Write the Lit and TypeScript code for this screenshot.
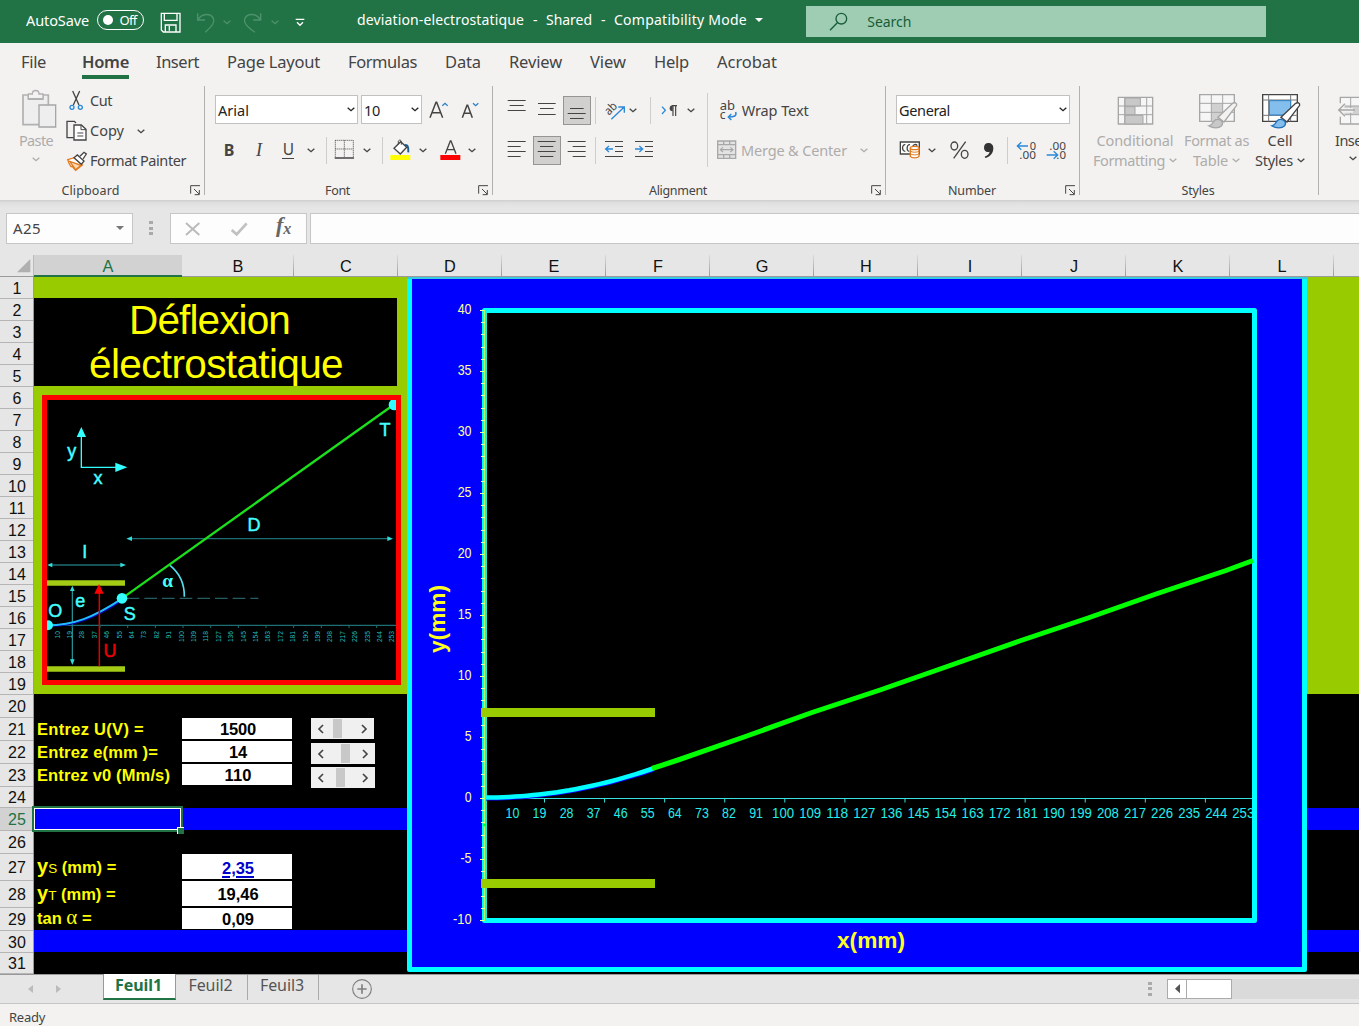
import { LitElement, html, css, svg } from "lit";
import { customElement, property } from "lit/decorators.js";

/** Inline text whose tracking is adjusted so that it spans a given width. */
@customElement("fit-text")
class FitText extends LitElement {
  @property({ type: Number }) w = 0;
  static styles = css`
    :host { display: inline-block; white-space: pre; flex: none; }
  `;
  render() {
    return html`<slot></slot>`;
  }
  firstUpdated() {
    const n = (this.textContent || "").length;
    const natural = this.getBoundingClientRect().width;
    if (n && this.w) this.style.letterSpacing = (this.w - natural) / n + "px";
  }
}

const fit = (text: string, w: number, cls = "") =>
  html`<fit-text class=${cls} w=${w}>${text}</fit-text>`;

/** Icons are drawn on a grid of three units per pixel. */
const icon = (x: number, y: number, w: number, h: number, body: unknown, cls = "") =>
  html`<svg class="ic ${cls}" width=${w / 3} height=${h / 3} viewBox="${x} ${y} ${w} ${h}">${body}</svg>`;

const chev = (cls = "") =>
  icon(0, 0, 24, 15, svg`<path d="M2 2l10 9 10-9" fill="none" stroke="currentColor" stroke-width="4"/>`, "chev " + cls);
const sep = () => html`<i class="sep"></i>`;

const launcher = icon(569, 555, 32, 32, svg`<path d="M571 581v-24h28M581 567l15 15M597 570v14h-14" fill="none" stroke="#444" stroke-width="3"/>`);

const lines = (rows: number[][], color = "#444") =>
  rows.map(([x, y, w]) => svg`<rect x=${x} y=${y} width=${w} height="3" fill=${color}/>`);

const I = {
  save: icon(478, 36, 66, 66, svg`<path d="M482 40h56v56h-50l-6-6zM491 40v21h38v-21M494 96v-21h32v21M506 78v14" fill="none" stroke="#fff" stroke-width="4"/>`),
  undo: icon(585, 36, 58, 64, svg`<path d="M590 40v20h22M591 59c12-20 38-20 46-4 6 14-6 24-24 42" fill="none" stroke="#4d926c" stroke-width="4"/>`),
  redo: icon(729, 36, 58, 64, svg`<path d="M782 40v20h-22M781 59c-12-20-38-20-46-4-6 14 8 26 30 42" fill="none" stroke="#4d926c" stroke-width="4"/>`),
  qat: icon(886, 52, 30, 26, svg`<path d="M888 56h26M892 65l9 9 9-9" fill="none" stroke="#fff" stroke-width="4"/>`),
  search: icon(1288, 34, 58, 60, svg`<circle cx="1325" cy="54" r="16" fill="none" stroke="#185c37" stroke-width="4"/><path d="M1313 66l-22 23" stroke="#185c37" stroke-width="4"/>`),
  paste: icon(62, 268, 108, 118, svg`<path d="M68 286h76v89h-76z" fill="#eee" stroke="#b1b1b1" stroke-width="5"/><path d="M84 287h44v12h-44z" fill="#f3f2f1" stroke="#b1b1b1" stroke-width="4"/><path d="M84 297v-14h12c0-14 20-14 20 0h12v14z" fill="#f3f2f1" stroke="#b1b1b1" stroke-width="4"/><path d="M116 316h50v66h-50z" fill="#eee" stroke="#a6a6a6" stroke-width="4"/>`),
  cut: icon(206, 270, 44, 64, svg`<path d="M217 273l19 42M238 273l-19 42" fill="none" stroke="#444" stroke-width="4"/><circle cx="215" cy="322" r="6" fill="none" stroke="#2b88d8" stroke-width="4"/><circle cx="240" cy="322" r="6" fill="none" stroke="#2b88d8" stroke-width="4"/>`),
  copy: icon(196, 358, 64, 64, svg`<path d="M219 411h-20v-49h22l5 5" fill="none" stroke="#444" stroke-width="4"/><path d="M220 373h22l14 13v32h-36z" fill="#fff" stroke="#444" stroke-width="4"/><path d="M241 373v14h15M230 397h18M230 406h18" fill="none" stroke="#444" stroke-width="3"/>`),
  painter: icon(196, 446, 64, 62, svg`<path d="M201 472l20-6 24 22-20 16c-5-4-7-8-10-12l-4 1c-5-6-8-14-10-21z" fill="#fff" stroke="#e07b21" stroke-width="4"/><path d="M207 477l34 12-16 13z" fill="#fbd9b4" stroke="#e07b21" stroke-width="4"/><path d="M220 466l10-8 20 18-8 10z" fill="#fff" stroke="#444" stroke-width="4"/><path d="M238 462l12-12 7 5-10 15" fill="#fff" stroke="#444" stroke-width="4"/>`),
  grow: icon(490, 296, 62, 58, svg`<path d="M493 349l18-46h2l18 46M499 334h26" fill="none" stroke="#444" stroke-width="4.5"/><path d="M530 313l8-7 8 7" fill="none" stroke="#2b7fc2" stroke-width="4"/>`),
  shrink: icon(584, 296, 56, 58, svg`<path d="M588 349l14-37h2l14 37M593 336h20" fill="none" stroke="#444" stroke-width="4.5"/><path d="M620 306l8 7 8-7" fill="none" stroke="#2b7fc2" stroke-width="4"/>`),
  borders: icon(1002, 417, 64, 64, svg`<path d="M1006 421h54v50M1006 421v50M1033 421v50M1006 447h54" fill="none" stroke="#444" stroke-width="3" stroke-dasharray="3 3"/><path d="M1004 474h58" stroke="#444" stroke-width="4.5"/>`),
  fill: icon(1172, 417, 64, 66, svg`<path d="M1184 445l20-20 18 17-19 20z" fill="#fff" stroke="#444" stroke-width="4"/><path d="M1197 433v-9c2-6 9-4 9 1v9" fill="none" stroke="#444" stroke-width="3"/><path d="M1216 436c8-3 12 4 11 21" fill="none" stroke="#1e5c8c" stroke-width="6"/><path d="M1173 465h60v15h-60z" fill="#ff0"/>`),
  fontColor: icon(1319, 417, 62, 66, svg`<path d="M1335 461l15-38h2l15 38M1340 449h22" fill="none" stroke="#444" stroke-width="4"/><path d="M1320 465h60v15h-60z" fill="red"/>`),
  top: icon(322, 297, 58, 66, lines([[324, 300, 54], [330, 315, 42], [324, 330, 54]])),
  mid: icon(412, 297, 58, 66, lines([[415, 309, 53], [421, 324, 41], [415, 342, 53]])),
  bot: icon(502, 297, 58, 69, lines([[511, 324, 41], [504, 339, 54], [511, 354, 41]])),
  orient: icon(610, 296, 66, 62, svg`<text transform="translate(625 343) rotate(-45)" font-size="36" font-family="Noto Sans, sans-serif" fill="#444" textLength="38" lengthAdjust="spacingAndGlyphs">ab</text><path d="M632 354l38-36M653 317h18v17" fill="none" stroke="#2b88d8" stroke-width="4"/>`),
  dir: icon(782, 310, 50, 38, svg`<path d="M785 318l10 11-10 11" fill="none" stroke="#2b88d8" stroke-width="4"/><path d="M818 314v32M826 314v32M830 315h-15" fill="none" stroke="#444" stroke-width="3.5"/><path d="M817 314a9 9 0 0 0 0 18z" fill="#444"/>`),
  left: icon(322, 420, 58, 60, lines([[324, 423, 54], [324, 438, 39], [324, 453, 54], [324, 468, 39]])),
  center: icon(412, 420, 58, 60, lines([[414, 423, 54], [421, 438, 40], [414, 453, 54], [421, 468, 40]])),
  right: icon(502, 420, 58, 60, lines([[504, 423, 54], [519, 438, 39], [504, 453, 54], [519, 468, 39]])),
  dedent: icon(612, 420, 60, 60, svg`${lines([[615, 423, 54], [645, 438, 24], [645, 453, 24], [615, 468, 54]])}<path d="M617 447h22M627 438l-10 9 10 9" fill="none" stroke="#2b88d8" stroke-width="4"/>`),
  indent: icon(702, 420, 60, 60, svg`${lines([[705, 423, 54], [735, 438, 24], [735, 453, 24], [705, 468, 54]])}<path d="M705 447h22M718 438l10 9-10 9" fill="none" stroke="#2b88d8" stroke-width="4"/>`),
  wrap: icon(957, 298, 56, 62, svg`<text x="959" y="327" font-size="36" font-family="Noto Sans, sans-serif" fill="#444" textLength="46" lengthAdjust="spacingAndGlyphs">ab</text><text x="959" y="355" font-size="36" font-family="Noto Sans, sans-serif" fill="#444">c</text><path d="M1007 334c4 12-4 15-22 15M994 340l-9 9 9 9" fill="none" stroke="#2b88d8" stroke-width="4.5"/>`),
  merge: icon(950, 419, 60, 60, svg`<path d="M952 422h54v52h-54zM952 433h54M952 463h54M970 422v11M988 422v11M970 463v11M988 463v11" fill="#e3e3e3" stroke="#a8a8a8" stroke-width="4"/><path d="M961 448h36M968 441l-8 7 8 7M990 441l8 7-8 7" fill="none" stroke="#a8a8a8" stroke-width="3.5"/>`),
  acct: icon(58, 426, 64, 58, svg`<path d="M62 432h57v36h-57z" fill="#fff" stroke="#444" stroke-width="4"/><path d="M77 440c-10-2-12 20 0 20M91 440c-10-2-12 20-2 20M99 446c2-8 10-8 14-3" fill="none" stroke="#444" stroke-width="4"/><path d="M92 450v25c4 6 22 6 26 0v-25" fill="#fff" stroke="#e07b21" stroke-width="4"/><ellipse cx="105" cy="450" rx="13" ry="5" fill="#fff" stroke="#e07b21" stroke-width="4"/><path d="M92 459c4 5 22 5 26 0M92 467c4 5 22 5 26 0" fill="none" stroke="#e07b21" stroke-width="3"/>`),
  pct: icon(206, 420, 62, 62, svg`<ellipse cx="222" cy="438" rx="10" ry="12" fill="none" stroke="#444" stroke-width="4"/><ellipse cx="253" cy="463" rx="10" ry="12" fill="none" stroke="#444" stroke-width="4"/><path d="M256 425l-36 50" stroke="#444" stroke-width="4"/>`),
  comma: icon(312, 426, 34, 50, svg`<path d="M328 429c9 0 15 6 15 15 0 16-10 27-24 30l-2-4c8-3 14-8 15-15-10 4-17-3-17-12 0-8 5-14 13-14z" fill="#333"/>`),
  incDec: icon(406, 418, 62, 62, svg`<path d="M410 436h32M422 425l-12 11 12 11" fill="none" stroke="#2b88d8" stroke-width="4"/><text x="447" y="447" font-size="35" font-family="Noto Sans, sans-serif" fill="#444" textLength="19" lengthAdjust="spacingAndGlyphs">0</text><text x="416" y="476" font-size="35" font-family="Noto Sans, sans-serif" fill="#444" textLength="50" lengthAdjust="spacingAndGlyphs">.00</text>`),
  decDec: icon(496, 418, 62, 62, svg`<text x="506" y="447" font-size="35" font-family="Noto Sans, sans-serif" fill="#444" textLength="50" lengthAdjust="spacingAndGlyphs">.00</text><text x="527" y="476" font-size="35" font-family="Noto Sans, sans-serif" fill="#444" textLength="29" lengthAdjust="spacingAndGlyphs">.0</text><path d="M498 463h32M519 452l12 11-12 11" fill="none" stroke="#2b88d8" stroke-width="4"/>`),
  cond: icon(712, 280, 112, 90, svg`<path d="M716 284h103v80h-103z" fill="#f6f6f6" stroke="#a6a6a6" stroke-width="4"/><path d="M716 310h103M716 336h103M735 284v80M801 284v80" fill="none" stroke="#a6a6a6" stroke-width="3"/><path d="M736 286h46v24h-46zM736 312h30v24h-30zM736 338h54v26h-54z" fill="#c8c8c8" stroke="#a6a6a6" stroke-width="3"/>`),
  fmtTable: icon(954, 280, 120, 106, svg`<path d="M959 284h104v80h-104z" fill="#f6f6f6" stroke="#a6a6a6" stroke-width="4"/><path d="M994 310h34v54h-34z" fill="#d0d0d0"/><path d="M959 310h104M959 337h104M994 284v80M1028 284v80" fill="none" stroke="#a6a6a6" stroke-width="3"/><path d="M1014 352l44-42c6-4 13-1 12 6l-38 50z" fill="#f3f2f1" stroke="#a6a6a6" stroke-width="4"/><path d="M987 378c14-2 10-20 24-20 14-1 20 12 14 19-9 9-26 8-38 1z" fill="#c8c8c8" stroke="#a6a6a6" stroke-width="4"/>`),
  cellSt: icon(1143, 280, 120, 106, svg`<path d="M1148 284h104v80h-104z" fill="#fff" stroke="#444" stroke-width="4"/><path d="M1148 300h104M1148 346h104M1166 284v80M1232 284v80" fill="none" stroke="#777" stroke-width="3"/><path d="M1168 302h64v43h-64z" fill="#83beec" stroke="#2b7fc2" stroke-width="3"/><path d="M1203 352l44-42c6-4 13-1 12 6l-38 50z" fill="#fff" stroke="#444" stroke-width="4"/><path d="M1176 378c14-2 10-20 24-20 14-1 20 12 14 19-9 9-26 8-38 1z" fill="#83beec" stroke="#1e6fba" stroke-width="4"/>`),
  insert: icon(1364, 280, 110, 90, svg`<path d="M1374 284h100v80h-100z" fill="#f6f6f6" stroke="#a6a6a6" stroke-width="4"/><path d="M1374 310h100v25h-100z" fill="#d0d0d0"/><path d="M1405 284v80M1374 310h100M1374 336h100" fill="none" stroke="#a6a6a6" stroke-width="3"/><path d="M1364 302h24l-2 14h26v14h-26l2 12h-24z" fill="#f3f2f1"/><path d="M1369 322h49M1388 303l-19 19 19 19" fill="none" stroke="#a6a6a6" stroke-width="4"/>`),
};

const COLS: [string, number][] = [["A", 148], ["B", 112], ["C", 104], ["D", 104], ["E", 104], ["F", 104], ["G", 104], ["H", 104], ["I", 104], ["J", 104], ["K", 104], ["L", 104], ["", 60]];
const ROWS = [...Array(19).fill(22), 23, 23, 23, 23, 21, 23, 23, 27, 27, 23, 22, 21];
const TABS: [string, number][] = [["File", 25], ["Home", 47], ["Insert", 43], ["Page Layout", 93], ["Formulas", 69], ["Data", 36], ["Review", 53], ["View", 36], ["Help", 35], ["Acrobat", 60]];
const XL = Array.from({ length: 28 }, (_, i) => 10 + 9 * i);

/** Main chart; user units are window pixels. */
const chart = () => {
  const yOf = (v: number) => 798 - v * 12.2;
  const ticks = Array.from({ length: 51 }, (_, i) => i - 10);
  const curve = Array.from({ length: 29 }, (_, i) => `${485 + i * 6},${(797.5 - 29 * Math.pow(i / 28, 2)).toFixed(1)}`).join(" ");
  return html`<svg class="chart" width="900" height="695" viewBox="407 277 900 695">
    <rect x="407" y="277" width="900" height="695" rx="2" fill="#0ff"/>
    <rect x="407" y="277" width="900" height="2" fill="#3cc8e0"/>
    <rect x="412" y="279" width="890" height="688" fill="#00f"/>
    <rect x="484.500" y="310.500" width="770" height="610" fill="#000" stroke="#0ff" stroke-width="5" stroke-linejoin="round"/>
    <path d="M484.500 310v611" stroke="#b8ff60" stroke-width="1"/><path d="M486 313v605" stroke="#3fd8b0" stroke-width="1"/>
    ${ticks.map((v) => svg`<path d="M${v % 5 ? 481 : 480} ${Math.round(yOf(v)) + 0.5}h4" stroke="#f4ff90" stroke-width="1"/>`)}
    ${ticks.filter((v) => v % 5 === 0).map((v) => svg`<text x="471.500" y=${yOf(v) + 4} class="yl" textLength=${v < 0 ? (v === -10 ? 18.5 : 11) : v < 10 ? 6.8 : 13.8} lengthAdjust="spacingAndGlyphs">${v}</text>`)}
    <path d="M487 798.500h765" stroke="#38e0e0" stroke-width="1"/>
    ${Array.from({ length: 12 }, (_, i) => svg`<path d="M${544.5 + i * 60.08} 798v4.500" stroke="#38e0e0" stroke-width="1"/>`)}
    <clipPath id="pl"><path d="M487 313h765v605h-765z"/></clipPath>
    <g clip-path="url(#pl)">${XL.map((v, i) => svg`<text x=${512.4 + i * 27.07} y="818.300" class="xl" textLength=${v < 100 ? 13.8 : 22} lengthAdjust="spacingAndGlyphs">${v}</text>`)}</g>
    <path d="M481 708h174v9h-174zM481 879h174v9h-174z" fill="#9c0"/>
    <polyline points=${curve} transform="translate(1 1)" fill="none" stroke="#00f" stroke-width="4"/>
    <polyline points=${curve} fill="none" stroke="#0ff" stroke-width="4.500"/>
    <path d="M652 768.500L678 760 744 737 812 712.500 880 690 950 665.500 1018 641.500 1088 618 1156 594 1226 570.500 1253 560.500" fill="none" stroke="#0f0" stroke-width="5"/>
    <circle cx="484.500" cy="825" r="1.300" fill="#0f0"/>
    <text class="ax" x="837" y="948" textLength="68" lengthAdjust="spacingAndGlyphs">x(mm)</text>
    <text class="ax" transform="translate(444.500 653) rotate(-90)" textLength="68" lengthAdjust="spacingAndGlyphs">y(mm)</text>
  </svg>`;
};

/** Schematic of the deflection, three units per pixel. */
const schema = () => html`<svg class="schema" width="359" height="290" viewBox="36 30 1077 870">
  <rect x="36" y="30" width="1077" height="870" fill="red"/>
  <rect x="51" y="45" width="1047" height="840" fill="#000"/>
  <clipPath id="in"><path d="M51 45h1047v840h-1047z"/></clipPath>
  <g clip-path="url(#in)">
    <g fill="none" stroke="#3ff" stroke-width="4"><path d="M154 150v97h110"/></g>
    <path d="M154 126l14 30h-28zM292 247l-36-14v28z" fill="#3ff"/>
    <g fill="none" stroke="#1d6f73" stroke-width="4"><path d="M300 461h780M60 540h220M51 721h1047"/><path d="M290 640h395" stroke-dasharray="38 15" stroke="#235f62"/></g>
    <path d="M127 612v220" stroke="#2a9da0" stroke-width="3.500"/>
    ${Array.from({ length: 12 }, (_, i) => svg`<path d="M${127 + i * 83} 721v8" stroke="#1d6f73" stroke-width="3"/>`)}
    <path d="M289 461l17-7v14zM1089 461l-17-7v14zM51 540l16-7v14zM288 540l-17-7v14zM127 602l-7 16h14zM127 840l-7-17h14z" fill="#3dd"/>
    <path d="M51 586h234v16h-234zM51 844h234v16h-234z" fill="#a4cc14"/>
    <path d="M420 541q44 36 43 94" fill="none" stroke="#5de" stroke-width="5"/>
    <path d="M276 640L1090 60" stroke="#1be01b" stroke-width="7"/>
    <path d="M51 722C130 723 190 702 276 645" fill="none" stroke="#00a" stroke-width="7"/>
    <path d="M51 721C130 721 190 698 276 641" fill="none" stroke="#2bf" stroke-width="6"/>
    <path d="M208 844v-224" stroke="#d00" stroke-width="4.500"/><path d="M207 597l14 29h-28z" fill="#f00"/>
    <circle cx="276" cy="640" r="16" fill="#3ff"/><circle cx="1093" cy="59" r="17" fill="#3ff"/><circle cx="54" cy="721" r="15" fill="#3ff"/>
    <g class="sl">
      <text x="125" y="216">y</text><text x="204" y="297">x</text><text x="1065" y="153">T</text><text x="672" y="439">D</text><text x="164" y="519">I</text>
      <text x="151" y="666">e</text><text x="76" y="697">O</text><text x="299" y="706">S</text><text x="413" y="607" class="alpha">α</text><text x="240" y="817" class="u">U</text>
    </g>
    ${XL.map((v, i) => svg`<text class="tiny" transform="translate(${89 + i * 37.2} 738) rotate(-90)">${v}</text>`)}
  </g>
</svg>`;

const spin = (cls: string) => html`<div class="spin ${cls}">
  ${icon(0, 0, 24, 30, svg`<path d="M18 3L6 15l12 12" fill="none" stroke="#444" stroke-width="5"/>`)}<b></b>
  ${icon(0, 0, 24, 30, svg`<path d="M6 3l12 12L6 27" fill="none" stroke="#444" stroke-width="5"/>`)}</div>`;

@customElement("app-root")
class AppRoot extends LitElement {
  static styles = css`
    :host { display: flex; flex-direction: column; width: 1359px; height: 1026px; overflow: hidden; background: #e6e6e6; color: #444; font: 14.5px/20px "Noto Sans", "Open Sans", sans-serif; }
    * { box-sizing: border-box; }
    .ic { display: block; flex: none; overflow: visible; }
    .sep { width: 1px; height: 27px; background: #cfcdcb; }
    .dis { color: #aeacaa; }
    /* title bar */
    .title { flex: none; height: 43px; background: #217346; color: #fff; display: flex; align-items: center; padding: 0 0 3px 26px; }
    .toggle { width: 47px; height: 20px; margin: 0 16px 0 8px; border: 1.4px solid #fff; border-radius: 10px; display: flex; align-items: center; font-size: 13px; padding-left: 4.5px; gap: 7px; }
    .toggle b { width: 10px; height: 10px; border-radius: 5px; background: #fff; }
    .qat { display: flex; align-items: center; width: 195px; padding-top: 5px; }
    .qat .dim { color: #4d926c; margin: 0 12px 0 8px; }
    .qat .g1 { width: 14px; } .qat .g2 { width: 4px; }
    .doc { display: flex; gap: 9px; margin-left: 2px; font-size: 14px; width: 449px; align-items: center; }
    .doc svg { margin-left: -1px; }
    .search { width: 460px; height: 31px; margin-top: 3px; background: #9fcdb3; display: flex; align-items: center; color: #185c37; padding-left: 23px; gap: 19px; font-size: 14px; }
    /* tabs */
    .tabs { flex: none; height: 43px; background: #f3f2f1; display: flex; gap: 28px; padding-left: 21px; font-size: 16.5px; line-height: 38px; }
    .tabs fit-text { height: 36px; }
    .tabs .on { font-weight: 600; margin-left: 8px; border-bottom: 4px solid #217346; margin-right: -1px; }
    /* ribbon */
    .ribbon { flex: none; height: 114px; background: #f3f2f1; display: flex; }
    .g { height: 109px; border-right: 1px solid #b3b0ad; display: flex; flex-direction: column; justify-content: space-between; flex: none; }
    .foot { height: 20px; display: grid; grid-template-columns: 1fr 11px; align-items: center; padding-right: 3px; font-size: 12.5px; text-align: center; margin-bottom: -5px; flex: none; }
    .foot span { padding-top: 1px; }
    .clip { width: 205px; } .clip .foot fit-text { margin-left: -9px; }
    .font { width: 288px; } .font .foot fit-text { margin-left: -8px; }
    .align { width: 393px; } .align .foot fit-text { margin-left: -8px; }
    .num { width: 194px; } .num .foot fit-text { margin-left: -7px; }
    .sty { width: 239px; } .sty .foot fit-text { margin-left: 12px; }
    .last { border: 0; width: 40px; overflow: hidden; padding: 7px 0 0 16px; }
    .cb { display: flex; height: 86px; }
    .paste { width: 66px; padding: 3px 0 0 6px; display: flex; flex-direction: column; align-items: center; flex: none; }
    .paste .ic:first-child { margin-left: 6px; } .paste fit-text { margin: 2px 0 7px; }
    .cl { display: grid; grid-template-rows: 30px 30px 30px; height: 90px; }
    .cl div { display: grid; grid-template-columns: 24px auto auto; justify-content: start; align-items: center; }
    .cl fit-text { padding-bottom: 2px; }
    .cl .ic:first-child { justify-self: start; } .cl .chev { margin-left: 13px; }
    .cl div:first-child .ic { margin-left: 3px; }
    .r { display: grid; justify-items: center; align-items: center; height: 30px; }
    .rows { padding-top: 9px; display: grid; row-gap: 10px; align-content: start; }
    .f1 { column-gap: 3px; margin-left: 10px; justify-content: start; grid-template-columns: 143px 61px 28px 29px; }
    .f2 { margin-left: 9px; grid-template-columns: 30px 30px 28px 18px 12px 25px 20px 10px 28px 16px 38px 6px; }
    .box { justify-self: stretch; height: 29px; background: #fff; border: 1px solid #c3c1bf; display: flex; align-items: center; justify-content: space-between; padding: 0 2px 0 2px; color: #222; margin-top: -1px; }
    .bold { font-weight: 700; font-size: 16px; } .it { font: italic 18px "Liberation Serif", serif; } .un { border-bottom: 1.5px solid #444; line-height: 17px; padding: 0 0 0 1px; font-size: 15.5px; }
    .al { display: flex; height: 86px; }
    .a1 { margin-left: 9px; grid-template-columns: 30px 30px 30px 7px 31px 6px 29px 8px 36px; }
    .a2 { margin-left: 9px; grid-template-columns: 30px 30px 30px 6px 32px 28px; justify-content: start; }
    .on-b { width: 28px; height: 29px; background: #d2d0ce; border: 1px solid #979593; display: grid; place-items: center; }
    .al > .sep { height: 74px; margin: 7px 10px 0 -2px; }
    .w { display: flex; align-items: center; height: 30px; } .w .tx { margin-left: 4px; } .w .chev { margin-left: 13px; }
    .w .ic:first-child { margin-left: 1px; } .w.m .ic:first-child { margin-left: -1px; }
    .n1 { margin-left: 10px; grid-template-columns: 174px; justify-content: start; }
    .n2 { margin-left: 10px; grid-template-columns: 28px 16px 38px 22px 14px 24px 36px; justify-content: start; }
    .st { display: grid; grid-template-columns: 82px 81px 46px; padding: 7px 0 0 14px; text-align: center; }
    .big { display: flex; flex-direction: column; align-items: center; }
    .big .ic:first-child { height: 36px; margin-bottom: 1px; margin-left: 2px; }
    .big div { display: flex; gap: 4px; align-items: center; height: 20px; }
    .last .big { align-items: flex-start; } .last .chev { margin: 6px 0 0 14px; }
    /* formula bar */
    .fbar { flex: none; height: 55px; display: flex; align-items: flex-start; padding: 13px 0 0 6px; background: linear-gradient(#cfcfcf, #e0e0e0 3px, #e6e6e6 8px); }
    .fb { height: 31px; background: #fdfdfd; border: 1px solid #c6c6c6; display: flex; align-items: center; }
    .nb { width: 127px; justify-content: space-between; padding: 0 8px 2px 6px; font-size: 15px; }
    .dots { width: 4px; height: 15px; background: repeating-linear-gradient(#aaa 0 3px, transparent 3px 5.5px); margin: 8px 17px 0 16px; flex: none; }
    .fx { width: 137px; padding-left: 14px; gap: 30px; margin-right: 3px; } .fx em { font: italic 700 22px/26px "Liberation Serif", serif; color: #666; margin: -4px 0 0 -1px; } .fx sub { font-size: 16px; vertical-align: -2px; }
    .in { flex: 1; border-right: 0; }
    /* headers */
    .ch { flex: none; height: 22px; display: flex; font: 16.3px/22px "Liberation Sans", Arial, sans-serif; color: #111; border-bottom: 1px solid #9b9b9b; }
    .corner { width: 34px; padding: 4px 0 0 17px; flex: none; border-right: 1px solid #bbb; }
    .ch span { flex: none; text-align: center; padding-left: 1px; border-right: 1px solid; border-image: linear-gradient(#ddd, #999) 1; }
    .ch .sel { background: #d2d2d2; color: #217346; height: 22px; border: 0; border-image: none; box-shadow: inset 0 -2px #217346; padding: 0; }
    .main { flex: none; height: 697px; display: flex; overflow: hidden; }
    .rh { flex: none; width: 34px; font: 16px "Liberation Sans", Arial, sans-serif; color: #111; border-right: 1px solid #9b9b9b; display: flex; flex-direction: column; }
    .rh span { display: flex; align-items: center; justify-content: center; border-bottom: 1px solid #b5b5b5; flex: none; padding: 2px 0 0 1px; }
    .rh .sel { background: #d2d2d2; color: #217346; }
    .sheet { position: relative; width: 1325px; height: 697px; background: #000; display: grid; grid-template-columns: 148px 110px 105px 1fr; grid-template-rows: 21px 88px 308px 23px 23px 23px 23px 22px 22px 23px 27px 27px 23px 22px 22px; font: bold 16.5px/22px "Liberation Sans", Arial, sans-serif; }
    .olive { grid-area: 1 / 1 / 4 / 5; background: #9c0; }
    .b25 { grid-area: 9 / 1 / 10 / 5; background: #00f; } .b30 { grid-area: 14 / 1 / 15 / 5; background: #00f; }
    .head { grid-area: 2 / 1 / 3 / 4; background: #000; color: #ff0; font: 40.5px/44px "Liberation Sans", Arial, sans-serif; }
    .head fit-text { display: block; width: max-content; } .h1 { margin-left: 95px; } .h2 { margin-left: 55px; }
    .lab { grid-column: 1; color: #ff0; padding-left: 3px; white-space: nowrap; align-self: center; }
    .val { grid-column: 2; background: #fff; color: #000; margin: 1px 0; display: grid; place-items: center; padding-left: 2px; }
    .val .lk { color: #00c; text-decoration: underline; text-decoration-thickness: 2px; text-underline-offset: 2px; }
    .r5 { grid-row: 5; } .r6 { grid-row: 6; } .r7 { grid-row: 7; } .r11 { grid-row: 11; } .r12 { grid-row: 12; } .r13 { grid-row: 13; }
    .lab.r11, .lab.r12 { padding-top: 1px; } .val.r11 { padding-top: 2px; }
    .lab.r13 { margin-top: -2px; }
    .lab big { font-size: 20px; } .lab small { font-size: 13.5px; font-weight: 400; }
    .lab .sy { font-family: "Liberation Serif", serif; font-size: 21px; line-height: 18px; font-weight: 400; }
    .cur { grid-area: 9 / 1; border: 2px solid #217346; margin: -2px -1px -2px -2px; outline: 1px solid #fff; outline-offset: -3px; position: relative; }
    .cur::after { content: ""; position: absolute; right: -3px; bottom: -4px; width: 6px; height: 6px; background: #217346; border: solid #fff; border-width: 1px 0 0 1px; }
    .spin { position: absolute; left: 277px; width: 64px; height: 21px; background: #f0f0f0; display: flex; justify-content: space-between; align-items: center; padding: 0 6px; }
    .spin b { width: 9px; height: 19px; background: #c8c8c8; }
    .spin.s1 { top: 441px; width: 63px; } .spin.s2 { top: 466px; } .spin.s3 { top: 490px; }
    .s1 b { margin-right: 11px; } .s2 b { margin-left: 5px; } .s3 b { margin-right: 5px; }
    .schema { position: absolute; left: 8px; top: 118px; } .chart { position: absolute; left: 373px; top: 0; }
    .sl { fill: #4ff; font: 54px "Liberation Sans", Arial, sans-serif; text-anchor: middle; stroke: #4ff; stroke-width: 1.4px; }
    .sl .u { fill: #e00; stroke: #e00; } .sl .alpha { font-family: "Liberation Serif", serif; font-weight: 700; stroke: none; font-size: 58px; }
    .tiny { font: 20px "Liberation Sans", sans-serif; fill: #2bb; text-anchor: end; }
    .yl { font: 14px "Liberation Sans", Arial, sans-serif; fill: #ffffa0; text-anchor: end; } .xl { font: 14px "Liberation Sans", Arial, sans-serif; fill: #2ee; text-anchor: middle; }
    .ax { font: bold 22px "Liberation Sans", Arial, sans-serif; fill: #ff2; }
    /* sheet tabs */
    .st-bar { flex: none; height: 29px; border-top: 1px solid #999; display: flex; font-size: 16px; line-height: 20px; color: #555; }
    .st-bar .nav { width: 103px; display: flex; padding: 9px 0 0 27px; gap: 23px; flex: none; }
    .tab { flex: none; width: 72px; text-align: center; height: 25px; border-right: 1px solid #aaa; } .tab.t3 { width: 71px; }
    .tab.on { width: 73px; background: #fff; color: #217346; font-weight: 700; border: solid #999; border-width: 0 1px; border-bottom: 2px solid #217346; height: 26px; margin-top: -1px; line-height: 22px; }
    .tab fit-text { margin-left: -2px; }
    .plus { margin: 3px 0 0 32px; width: 800px; flex: none; }
    .st-bar .dots { margin: 7px 15px 0 -3px; }
    .hs { flex: 1; height: 20px; margin-top: 4px; background: #dadada; display: flex; }
    .hs div { border: 1px solid #ababab; background: #fff; width: 20px; display: grid; place-items: center; flex: none; } .hs .th { margin-left: -1px; width: 46px; }
    .status { flex: none; height: 23px; background: #f3f2f1; border-top: 1px solid #c6c6c6; padding: 3px 0 0 9px; font-size: 13px; }
  `;

  render() {
    return html`
      <div class="title">
        ${fit("AutoSave", 63)}<div class="toggle"><b></b>${fit("Off", 17)}</div>
        <div class="qat">${I.save}<span class="g1"></span>${I.undo}${chev("dim")}${I.redo}${chev("dim")}<span class="g2"></span>${I.qat}</div>
        <div class="doc">${fit("deviation-electrostatique", 167)}${fit("-", 4)}${fit("Shared", 46)}${fit("-", 4)}${fit("Compatibility Mode", 133)}${icon(0, 0, 24, 12, svg`<path d="M0 0h24l-12 12z" fill="#fff"/>`)}</div>
        <div class="search">${I.search}${fit("Search", 44)}</div>
      </div>
      <div class="tabs">${TABS.map(([t, w]) => fit(t, w, t === "Home" ? "on" : ""))}</div>
      <div class="ribbon">
        <div class="g clip">
          <div class="cb">
            <div class="paste dis">${I.paste}${fit("Paste", 34)}${chev()}</div>
            <div class="cl">
              <div>${I.cut}${fit("Cut", 22)}</div>
              <div>${I.copy}${fit("Copy", 34)}${chev()}</div>
              <div>${I.painter}${fit("Format Painter", 96)}</div>
            </div>
          </div>
          <div class="foot"><span>${fit("Clipboard", 58)}</span>${launcher}</div>
        </div>
        <div class="g font">
          <div class="rows">
            <div class="r f1"><div class="box">${fit("Arial", 31)}${chev()}</div><div class="box">${fit("10", 16)}${chev()}</div>${I.grow}${I.shrink}</div>
            <div class="r f2"><span class="bold">B</span><span class="it">I</span><span class="un">U</span>${chev()}${sep()}${I.borders}${chev()}${sep()}${I.fill}${chev()}${I.fontColor}${chev()}</div>
          </div>
          <div class="foot"><span>${fit("Font", 25)}</span>${launcher}</div>
        </div>
        <div class="g align">
          <div class="al">
            <div class="rows">
              <div class="r a1">${I.top}${I.mid}<div class="on-b">${I.bot}</div>${sep()}${I.orient}${chev()}${sep()}${I.dir}${chev()}</div>
              <div class="r a2">${I.left}<div class="on-b">${I.center}</div>${I.right}${sep()}${I.dedent}${I.indent}</div>
            </div>
            ${sep()}
            <div class="rows">
              <div class="w">${I.wrap}${fit("Wrap Text", 67, "tx")}</div>
              <div class="w m dis">${I.merge}${fit("Merge & Center", 106, "tx")}${chev()}</div>
            </div>
          </div>
          <div class="foot"><span>${fit("Alignment", 58)}</span>${launcher}</div>
        </div>
        <div class="g num">
          <div class="rows">
            <div class="r n1"><div class="box">${fit("General", 51)}${chev()}</div></div>
            <div class="r n2">${I.acct}${chev()}${I.pct}${I.comma}${sep()}${I.incDec}${I.decDec}</div>
          </div>
          <div class="foot"><span>${fit("Number", 48)}</span>${launcher}</div>
        </div>
        <div class="g sty">
          <div class="st">
            <div class="big dis">${I.cond}<div>${fit("Conditional", 77)}</div><div>${fit("Formatting", 72)}${chev()}</div></div>
            <div class="big dis">${I.fmtTable}<div>${fit("Format as", 65)}</div><div>${fit("Table", 35)}${chev()}</div></div>
            <div class="big">${I.cellSt}<div>${fit("Cell", 25)}</div><div>${fit("Styles", 38)}${chev()}</div></div>
          </div>
          <div class="foot"><span>${fit("Styles", 33)}</span></div>
        </div>
        <div class="g last"><div class="big">${I.insert}<div>${fit("Insert", 37)}</div>${chev()}</div></div>
      </div>
      <div class="fbar">
        <div class="fb nb">${fit("A25", 28)}${icon(0, 0, 24, 12, svg`<path d="M0 0h24l-12 12z" fill="#777"/>`)}</div>
        <i class="dots"></i>
        <div class="fb fx">
          ${icon(0, 0, 48, 42, svg`<path d="M3 3l40 36M43 3L3 39" stroke="#bbb" stroke-width="6"/>`)}
          ${icon(0, 0, 48, 42, svg`<path d="M2 24l15 13L47 4" fill="none" stroke="#c0c0c0" stroke-width="8"/>`)}
          <em>f<sub>x</sub></em>
        </div>
        <div class="fb in"></div>
      </div>
      <div class="ch">
        <div class="corner">${icon(0, 0, 40, 40, svg`<path d="M40 0v40H0z" fill="#b0b0b0"/>`)}</div>
        ${COLS.map(([c, w]) => html`<span class=${c === "A" ? "sel" : ""} style="width:${w}px">${c}</span>`)}
      </div>
      <div class="main">
        <div class="rh">${ROWS.map((h, i) => html`<span class=${i === 24 ? "sel" : ""} style="height:${h}px">${i + 1}</span>`)}</div>
        <div class="sheet">
          <div class="olive"></div><div class="b25"></div><div class="b30"></div>
          <div class="head">${fit("Déflexion", 161, "h1")}${fit("électrostatique", 254, "h2")}</div>
          <div class="lab r5">${fit("Entrez U(V) =", 107)}</div><div class="val r5">${fit("1500", 36)}</div>
          <div class="lab r6">${fit("Entrez e(mm )=", 121)}</div><div class="val r6">${fit("14", 18)}</div>
          <div class="lab r7">${fit("Entrez v0 (Mm/s)", 133)}</div><div class="val r7">${fit("110", 27)}</div>
          <div class="cur"></div>
          <div class="lab r11"><big>y</big><small>S</small> (mm) =</div><div class="val r11">${fit("2,35", 32, "lk")}</div>
          <div class="lab r12"><big>y</big><small>T</small> (mm) =</div><div class="val r12">${fit("19,46", 41)}</div>
          <div class="lab r13">tan <span class="sy">α</span> =</div><div class="val r13">${fit("0,09", 32)}</div>
          ${spin("s1")}${spin("s2")}${spin("s3")}
          ${schema()}${chart()}
        </div>
      </div>
      <div class="st-bar">
        <div class="nav">${icon(0, 0, 18, 30, svg`<path d="M18 3v24L3 15z" fill="#bbb"/>`)}${icon(0, 0, 18, 30, svg`<path d="M0 3v24l15-12z" fill="#bbb"/>`)}</div>
        <div class="tab on">${fit("Feuil1", 47)}</div><div class="tab">${fit("Feuil2", 44)}</div><div class="tab t3">${fit("Feuil3", 44)}</div>
        <div class="plus">${icon(0, 0, 66, 66, svg`<circle cx="33" cy="33" r="28" fill="none" stroke="#808080" stroke-width="3.500"/><path d="M33 19v28M19 33h28" stroke="#808080" stroke-width="5"/>`)}</div>
        <i class="dots"></i>
        <div class="hs"><div>${icon(0, 0, 15, 28, svg`<path d="M15 0v28L0 14z" fill="#555"/>`)}</div><div class="th"></div></div>
      </div>
      <div class="status">${fit("Ready", 36)}</div>
    `;
  }
}
